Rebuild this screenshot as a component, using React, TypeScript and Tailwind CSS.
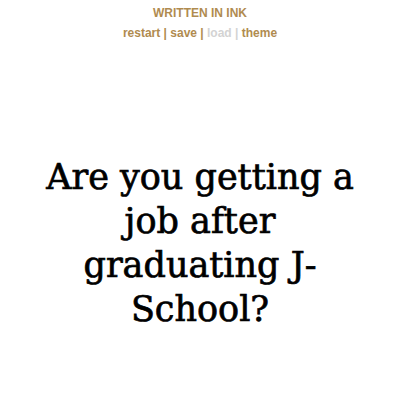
const App = () => {
  return (
    <div className="min-h-[400px] w-full bg-white">
      <header className="pt-[6px] text-center font-['Liberation_Sans',sans-serif] font-bold text-[#b08b4f]">
        <h1 className="text-[12px] leading-[15px]">WRITTEN IN INK</h1>
        <nav className="mt-[5px] text-[12px] leading-[14px]">
          <span>restart</span> | <span>save</span> |{" "}
          <span className="text-[#d3d3d3]">load</span>{" "}
          <span className="text-[#d3d3d3]">|</span> <span>theme</span>
        </nav>
      </header>
      <main className="mx-auto mt-[115px] w-[330px] text-center">
        <h2 className="font-['DejaVu_Serif',serif] text-[35px] leading-[44px] text-black [-webkit-text-stroke:0.7px_black]">
          Are you getting a job after graduating J-School?
        </h2>
      </main>
    </div>
  );
};

export default App;
